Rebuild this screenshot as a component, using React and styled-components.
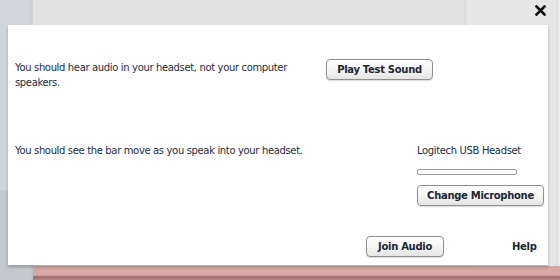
import React from 'react'
import styled, { createGlobalStyle } from 'styled-components'

const GlobalStyle = createGlobalStyle`
  html, body {
    margin: 0;
    padding: 0;
  }
  body {
    font-family: 'DejaVu Sans', Verdana, sans-serif;
  }
`

const Backdrop = styled.div`
  position: relative;
  width: 560px;
  height: 280px;
  overflow: hidden;
  box-sizing: border-box;
  padding: 25px 12px 15px 8px;
  background:
    linear-gradient(to right, #cfd5d8 0, #d3d9dc 27px, #c9cfd2 31px, #c9cfd2 33px) 0 0 / 33px 190px no-repeat,
    linear-gradient(to right, #c3c9cc 0, #c3c9cc 30px, #b9bfc2 33px) 0 190px / 33px 90px no-repeat,
    linear-gradient(to bottom, #d9a4a4 0, #dba9a9 9px, #9a6565 11px, #b88a8a 14px) 0 266px / 100% 14px no-repeat,
    linear-gradient(to right, transparent 464px, #d8d8d8 464px, #e7e7e7 468px, #e7e7e7 556px, #d5d5d5 557px, #ececec 558px),
    #e2e2e2;
`

const CloseButton = styled.button`
  position: absolute;
  top: 5px;
  right: 14px;
  width: 11px;
  height: 11px;
  padding: 0;
  border: 0;
  background: none;
  cursor: pointer;
  svg {
    display: block;
  }
`

const Panel = styled.div`
  height: 240px;
  background: #fff;
  box-shadow: 0 2px 3px rgba(0, 0, 0, 0.25);
  display: flex;
  flex-direction: column;
  color: #1d2d3c;
  font-size: 10px;
  line-height: 15px;
  letter-spacing: -0.35px;
`

const Row = styled.div`
  display: grid;
  grid-template-columns: ${({ left }) => left}px 1fr;
  padding-left: 7px;
  margin-top: ${({ top }) => top}px;
`

const Text = styled.p`
  margin: ${({ offset }) => offset || 0}px 0 0;
`

const Button = styled.button`
  font-family: 'DejaVu Sans', Verdana, sans-serif;
  font-weight: bold;
  font-size: 10px;
  letter-spacing: -0.3px;
  color: #1a2634;
  height: 21px;
  width: ${({ w }) => w}px;
  padding: 0;
  border: 1px solid #8f8f8f;
  border-radius: 4px;
  background: linear-gradient(to bottom, #ffffff 0%, #f6f6f6 50%, #e4e4e4 100%);
  box-shadow: 0 1px 1px rgba(0, 0, 0, 0.15);
  cursor: pointer;
`

const Device = styled.div`
  display: flex;
  flex-direction: column;
  align-items: flex-start;
`

const LevelBar = styled.div`
  width: 98px;
  height: 4px;
  margin: 11px 0 10px;
  border: 1px solid #9a9a9a;
  border-radius: 2px;
  background: #fafafa;
`

const Footer = styled.div`
  margin-top: auto;
  margin-bottom: 8px;
  display: flex;
  align-items: center;
  padding-left: 358px;
`

const Help = styled.a`
  margin-left: 68px;
  font-weight: bold;
  font-size: 10px;
  letter-spacing: -0.3px;
  color: #1a2634;
  text-decoration: none;
`

export default function App () {
  return (
    <>
      <GlobalStyle />
      <Backdrop>
        <CloseButton aria-label='Close'>
          <svg width='11' height='11' viewBox='0 0 11 11'>
            <path d='M1.5 1.5 L9.5 9.5 M9.5 1.5 L1.5 9.5' stroke='#111' strokeWidth='2.6' strokeLinecap='square' />
          </svg>
        </CloseButton>
        <Panel>
          <Row left={311} top={34}>
            <Text offset={1}>
              You should hear audio in your headset, not your computer speakers.
            </Text>
            <div>
              <Button w={107}>Play Test Sound</Button>
            </div>
          </Row>
          <Row left={402} top={52}>
            <Text offset={1}>You should see the bar move as you speak into your headset.</Text>
            <Device>
              <Text offset={1}>Logitech USB Headset</Text>
              <LevelBar />
              <Button w={127}>Change Microphone</Button>
            </Device>
          </Row>
          <Footer>
            <Button w={78}>Join Audio</Button>
            <Help href='#'>Help</Help>
          </Footer>
        </Panel>
      </Backdrop>
    </>
  )
}
